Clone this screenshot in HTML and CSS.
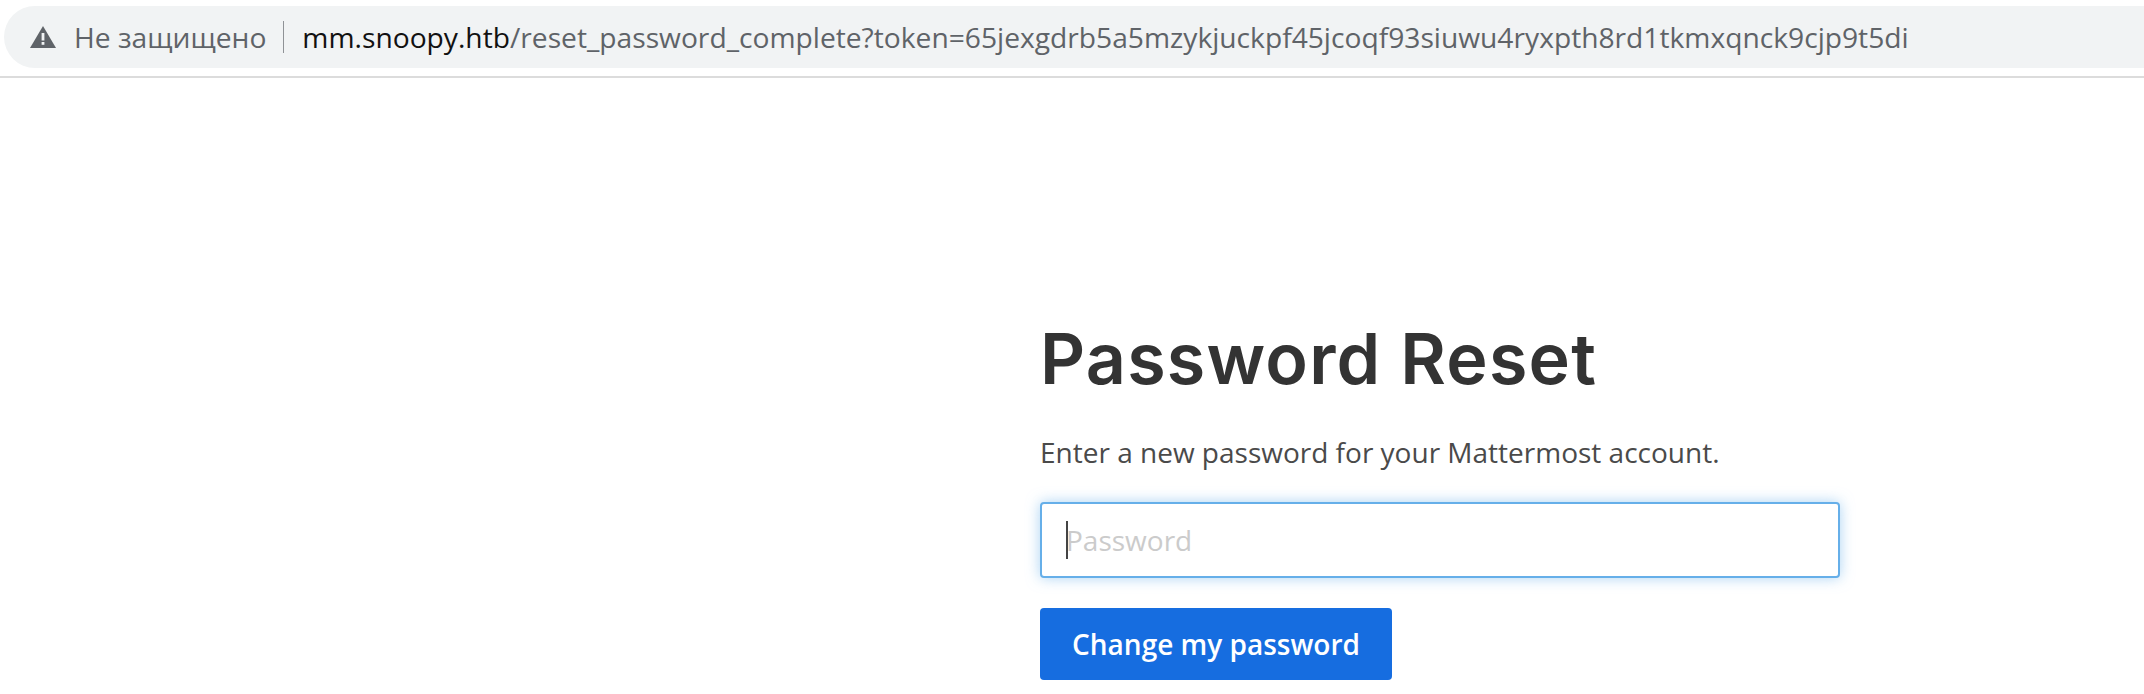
FILE: index.html
```html
<!DOCTYPE html>
<html lang="ru">
<head>
<meta charset="utf-8">
<title>Password Reset</title>
<link rel="stylesheet" href="styles.css">
</head>
<body>
<header class="toolbar">
  <div class="omnibox">
    <svg class="warn" width="26" height="24" viewBox="0 0 26 24" aria-hidden="true"><path d="M13 1 L26 23 H0 Z" fill="#5f6368"/><rect x="11.6" y="8" width="2.8" height="7.5" fill="#f1f3f4"/><rect x="11.6" y="17" width="2.8" height="2.8" fill="#f1f3f4"/></svg>
    <span class="status">Не защищено</span>
    <span class="divider"></span>
    <span class="url"><span class="host">mm.snoopy.htb</span>/reset_password_complete?token=65jexgdrb5a5mzykjuckpf45jcoqf93siuwu4ryxpth8rd1tkmxqnck9cjp9t5di</span>
  </div>
</header>
<main class="page">
  <section class="card">
    <h1 class="title">Password Reset</h1>
    <p class="lead">Enter a new password for your Mattermost account.</p>
    <div class="field"><span class="caret"></span><span class="placeholder">Password</span></div>
    <button class="submit" type="button">Change my password</button>
  </section>
</main>
</body>
</html>
```
FILE: styles.css
```css
* { box-sizing: border-box; }
html, body { margin: 0; height: 100%; background: #fff; overflow: hidden; }
body { font-family: "Open Sans", "Liberation Sans", sans-serif; }
.toolbar { height: 78px; padding: 6px 0 10px 4px; border-bottom: 2px solid #dcdcdc; }
.omnibox {
  height: 62px; display: flex; align-items: center; padding-left: 26px;
  background: #f1f3f4; border-radius: 31px 0 0 31px;
}
.warn { flex: none; }
.status { margin-left: 18px; font-size: 28.2px; color: #5f6368; white-space: nowrap; }
.divider { width: 1px; height: 32px; margin: 0 18px 0 17px; background: #8f9296; flex: none; }
.url { font-size: 28.2px; color: #5f6368; white-space: nowrap; }
.host { color: #111; }
.page { padding: 0 0 0 1040px; }
.card { width: 800px; }
.title {
  margin: 239px 0 0; font-family: Inter, "Liberation Sans", sans-serif;
  font-weight: 600; font-size: 70px; letter-spacing: 1.2px; line-height: 84px; color: #333;
}
.lead { margin: 33px 0 0; font-size: 28px; line-height: 37px; color: #4a4a4a; white-space: nowrap; }
.field {
  position: relative; height: 76px; margin-top: 31px; padding-left: 24px;
  display: flex; align-items: center; background: #fff;
  border: 2px solid #66afe9; border-radius: 4px;
  box-shadow: 0 0 14px rgba(102, 175, 233, .55);
}
.caret { position: absolute; left: 24px; top: 17px; width: 2px; height: 38px; background: #444; }
.placeholder { font-size: 28px; color: #cbcbcb; }
.submit {
  display: block; width: 352px; height: 72px; margin-top: 30px; padding: 0;
  background: #166de0; color: #fff; border: 0; border-radius: 4px; white-space: nowrap;
  font-family: inherit; font-size: 28px; font-weight: 600;
}
```
